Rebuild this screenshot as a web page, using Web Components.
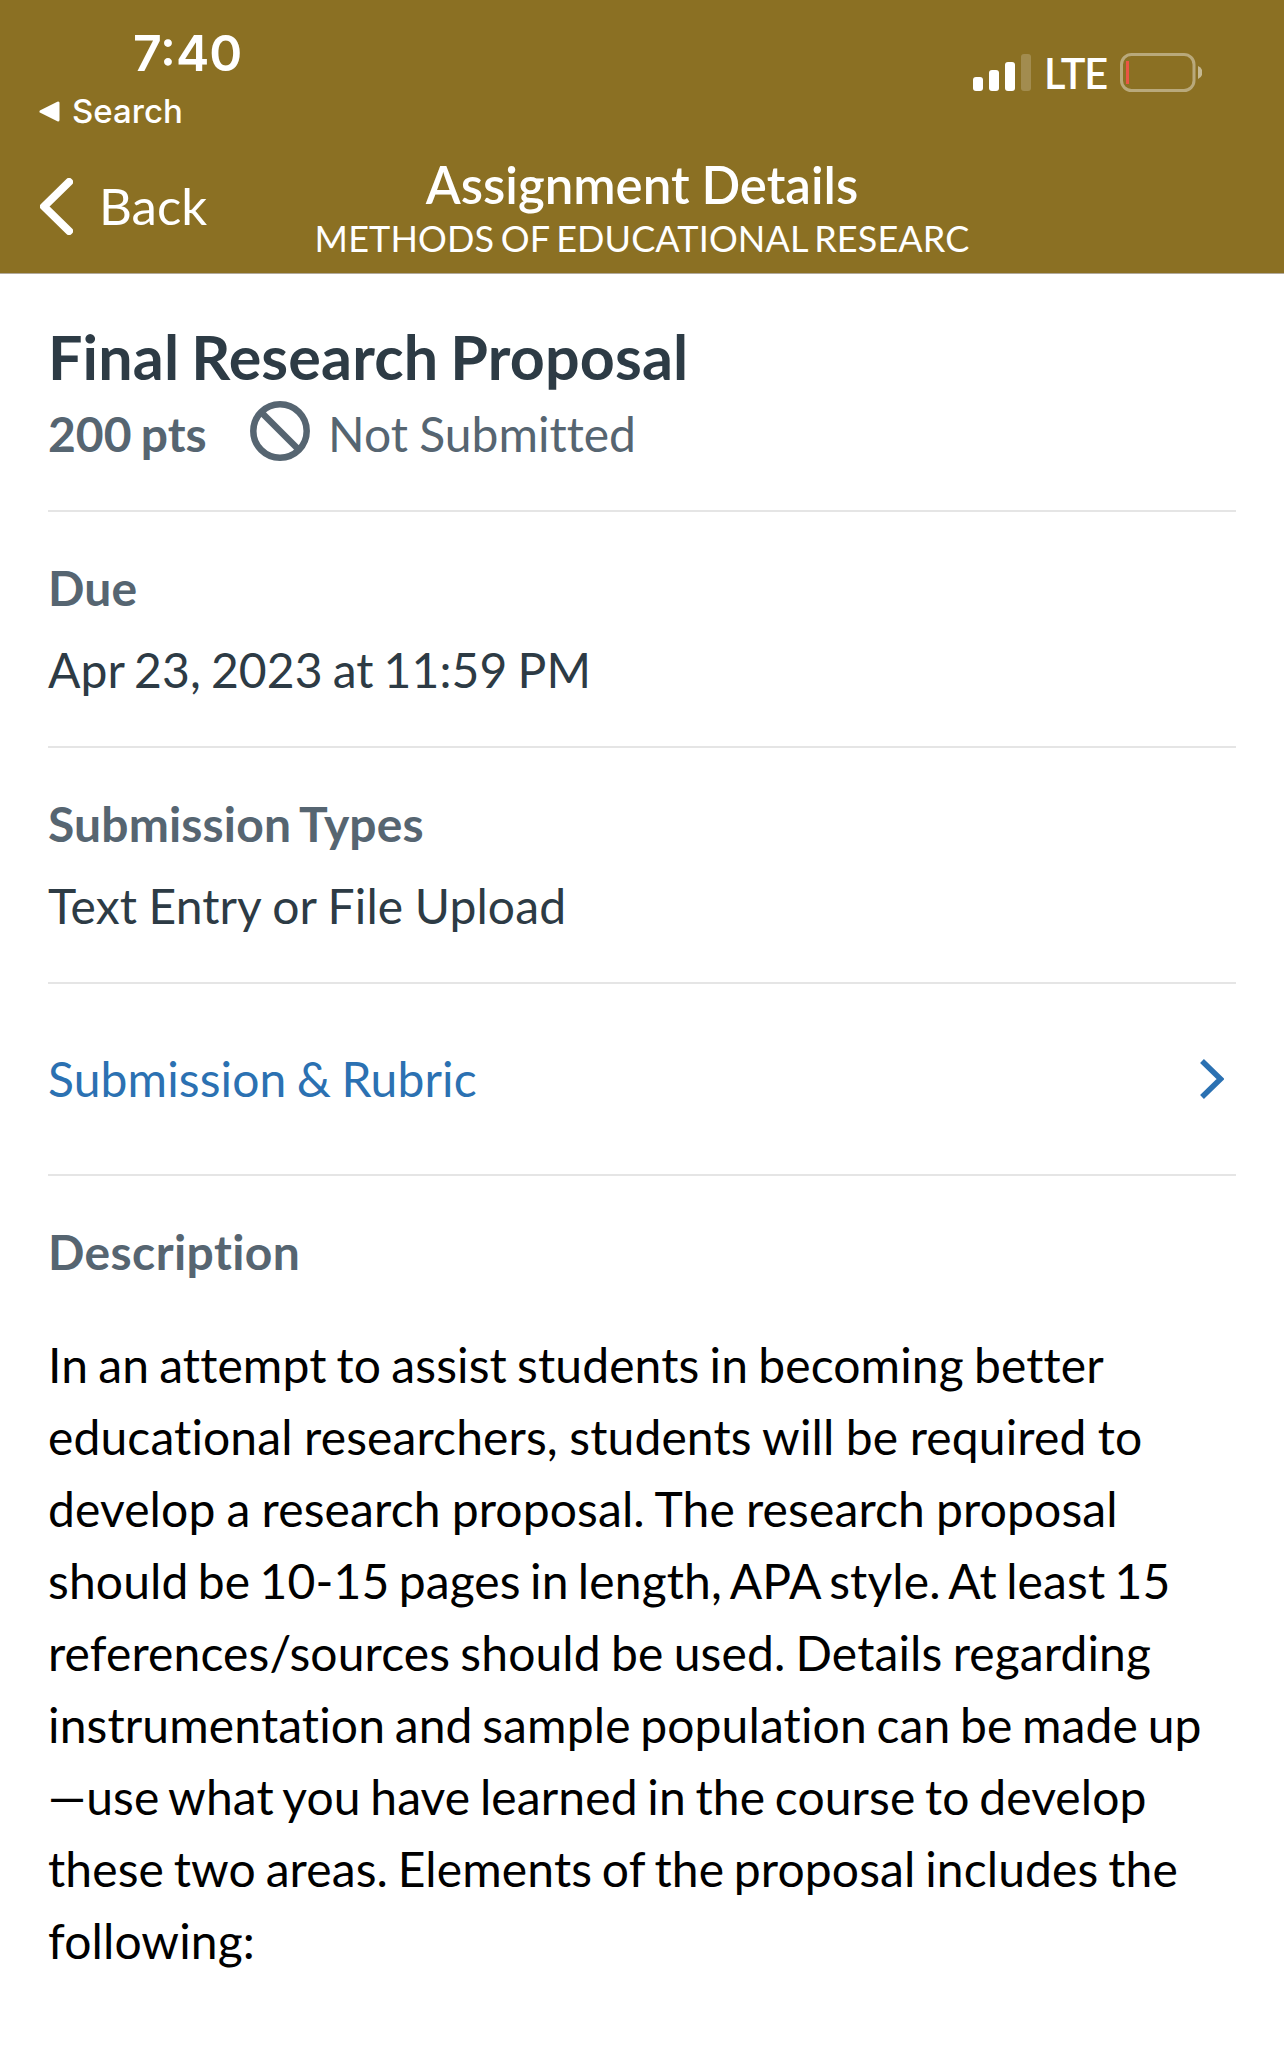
<!DOCTYPE html>
<html lang="en">
<head>
<meta charset="utf-8">
<title>Assignment Details</title>
<style>
    body {
        margin: 0;
        background: #fff;
        font-family: Lato, "Liberation Sans", sans-serif;
        font-variant-ligatures: none;
        word-spacing: -0.9px;
    }
</style>
</head>
<body>
    <status-bar time="7:40" app="Search" network="LTE"></status-bar>
    <nav-bar back="Back">
        <span slot="title">Assignment Details</span>
        <span slot="subtitle">METHODS OF EDUCATIONAL RESEARC</span>
    </nav-bar>
    <main>
        <assignment-header points="200 pts" status="Not Submitted">Final Research Proposal</assignment-header>
        <detail-section label="Due" style="--value-word: -2.4px">Apr 23, 2023 at 11:59 PM</detail-section>
        <detail-section label="Submission Types">Text Entry or File Upload</detail-section>
        <link-row>Submission &amp; Rubric</link-row>
        <description-block label="Description">
            <span style="word-spacing: -2.3px">In an attempt to assist students in becoming better</span>
            <span style="word-spacing: -1px">educational researchers, students will be required to</span>
            <span style="word-spacing: -1.3px">develop a research proposal. The research proposal</span>
            <span style="word-spacing: -3.1px">should be 10-15 pages in length, APA style. At least 15</span>
            <span style="word-spacing: -2.2px">references/sources should be used. Details regarding</span>
            <span style="word-spacing: -2.8px">instrumentation and sample population can be made up</span>
            <span style="word-spacing: -2.8px">—use what you have learned in the course to develop</span>
            <span style="word-spacing: -2.7px">these two areas. Elements of the proposal includes the</span>
            <span>following:</span>
        </description-block>
    </main>

<script>
    class StatusBar extends HTMLElement {
        constructor() {
            super();
            const shadowRoot = this.attachShadow({ mode: 'open' });
            shadowRoot.innerHTML = `
                <style>
                    :host {
                        display: flex;
                        justify-content: space-between;
                        box-sizing: border-box;
                        height: 141px;
                        padding: 23px 82px 0 39px;
                        background: #8b7023;
                        color: #fff;
                        font-family: Inter, "Liberation Sans", sans-serif;
                        font-variant-ligatures: normal;
                    }
                    .time {
                        margin: 0 0 8px 94px;
                        font-size: 50px;
                        font-weight: 600;
                        line-height: 60px;
                    }
                    .app {
                        display: flex;
                        align-items: center;
                        gap: 12px;
                        font-size: 33px;
                        font-weight: 500;
                        line-height: 40px;
                    }
                    .right {
                        display: flex;
                        align-items: flex-start;
                        padding-top: 30px;
                    }
                    .network {
                        width: 76px;
                        margin: -5px 0 0 13px;
                        font-family: Lato, "Liberation Sans", sans-serif;
                        font-size: 41.5px;
                        font-weight: 600;
                        line-height: 50px;
                        letter-spacing: -1px;
                    }
                    svg { display: block; }
                </style>
                <div>
                    <div class="time"></div>
                    <div class="app">
                        <svg width="21" height="21" viewBox="0 0 21 21"><path d="M2 10.5 19 2V19Z" fill="#fff" stroke="#fff" stroke-width="3" stroke-linejoin="round"/></svg>
                        <span></span>
                    </div>
                </div>
                <div class="right">
                    <svg width="58" height="39" viewBox="0 0 58 39" fill="#fff">
                        <rect x="0" y="24" width="10" height="14" rx="3"/>
                        <rect x="16" y="17" width="10" height="21" rx="3"/>
                        <rect x="32" y="9" width="10" height="29" rx="3"/>
                        <rect x="48" y="1" width="10" height="37" rx="3" opacity=".2"/>
                    </svg>
                    <span class="network"></span>
                    <svg width="82" height="39" viewBox="0 0 82 39">
                        <rect x="1.5" y="1.5" width="72.5" height="36" rx="10" fill="none" stroke="#fff" stroke-opacity=".4" stroke-width="3"/>
                        <path d="M78 13a7 7 0 0 1 0 13Z" fill="#fff" opacity=".5"/>
                        <rect x="6" y="8" width="3" height="23" fill="#eb5545"/>
                    </svg>
                </div>
            `;
            shadowRoot.querySelector('.time').textContent = this.getAttribute('time');
            shadowRoot.querySelector('.app span').textContent = this.getAttribute('app');
            shadowRoot.querySelector('.network').textContent = this.getAttribute('network');
        }
    }
    customElements.define('status-bar', StatusBar);

    class NavBar extends HTMLElement {
        constructor() {
            super();
            const shadowRoot = this.attachShadow({ mode: 'open' });
            shadowRoot.innerHTML = `
                <style>
                    :host {
                        display: grid;
                        grid-template-columns: 300px 1fr 300px;
                        box-sizing: border-box;
                        height: 133px;
                        padding-top: 14px;
                        border-bottom: 1px solid #b2aa9c;
                        background: #8b7023;
                        color: #fff;
                    }
                    .back {
                        display: flex;
                        align-items: flex-start;
                        gap: 26px;
                        padding: 21px 0 0 40px;
                        font-size: 51px;
                        line-height: 60px;
                    }
                    .back svg { margin-top: 2px; }
                    .titles {
                        display: flex;
                        flex-direction: column;
                        align-items: center;
                        gap: 1px;
                        white-space: nowrap;
                    }
                    .title { font-size: 51px; font-weight: 600; line-height: 60px; }
                    .subtitle {
                        font-size: 36px;
                        line-height: 44px;
                        letter-spacing: 0.12px;
                        word-spacing: -2.6px;
                    }
                </style>
                <div class="back">
                    <svg width="33" height="57" viewBox="0 0 33 57"><path d="M29 4 4 28.5 29 53" fill="none" stroke="#fff" stroke-width="8" stroke-linecap="round" stroke-linejoin="round"/></svg>
                    <span></span>
                </div>
                <div class="titles">
                    <div class="title"><slot name="title"></slot></div>
                    <div class="subtitle"><slot name="subtitle"></slot></div>
                </div>
            `;
            shadowRoot.querySelector('.back span').textContent = this.getAttribute('back');
        }
    }
    customElements.define('nav-bar', NavBar);

    class AssignmentHeader extends HTMLElement {
        constructor() {
            super();
            const shadowRoot = this.attachShadow({ mode: 'open' });
            shadowRoot.innerHTML = `
                <style>
                    :host {
                        display: block;
                        margin: 0 48px;
                        padding: 47px 0 49px;
                        border-bottom: 2px solid #e5e5e5;
                        color: #566571;
                    }
                    .name {
                        color: #2d3b45;
                        font-size: 61px;
                        font-weight: 700;
                        line-height: 72px;
                        letter-spacing: 0.15px;
                        word-spacing: -2.9px;
                    }
                    .row {
                        display: flex;
                        margin-top: 8px;
                        height: 60px;
                        font-size: 48px;
                        line-height: 66px;
                    }
                    .points { width: 202px; font-weight: 700; word-spacing: -2.4px; }
                    svg { margin-right: 18px; }
                </style>
                <div class="name"><slot></slot></div>
                <div class="row">
                    <span class="points"></span>
                    <svg width="60" height="60" viewBox="0 0 60 60" fill="none" stroke="#566571" stroke-width="6.5"><circle cx="30" cy="30" r="26.7"/><path d="M11.5 11.5 48.5 48.5"/></svg>
                    <span class="status"></span>
                </div>
            `;
            shadowRoot.querySelector('.points').textContent = this.getAttribute('points');
            shadowRoot.querySelector('.status').textContent = this.getAttribute('status');
        }
    }
    customElements.define('assignment-header', AssignmentHeader);

    class DetailSection extends HTMLElement {
        constructor() {
            super();
            const shadowRoot = this.attachShadow({ mode: 'open' });
            shadowRoot.innerHTML = `
                <style>
                    :host {
                        display: block;
                        margin: 0 48px;
                        padding: 47px 0;
                        border-bottom: 2px solid #e5e5e5;
                        color: #2d3b45;
                        font-size: 48px;
                        line-height: 58px;
                    }
                    .label {
                        margin-bottom: 24px;
                        color: #566571;
                        font-weight: 700;
                        letter-spacing: 0.15px;
                        word-spacing: -2.5px;
                    }
                    .value { letter-spacing: 0.1px; word-spacing: var(--value-word, -0.9px); }
                </style>
                <div class="label"></div>
                <div class="value"><slot></slot></div>
            `;
            shadowRoot.querySelector('.label').textContent = this.getAttribute('label');
        }
    }
    customElements.define('detail-section', DetailSection);

    class LinkRow extends HTMLElement {
        constructor() {
            super();
            const shadowRoot = this.attachShadow({ mode: 'open' });
            shadowRoot.innerHTML = `
                <style>
                    :host {
                        display: flex;
                        align-items: center;
                        justify-content: space-between;
                        height: 190px;
                        margin: 0 48px;
                        padding-right: 12px;
                        border-bottom: 2px solid #e5e5e5;
                        color: #2b71b2;
                        font-size: 48px;
                        line-height: 58px;
                        letter-spacing: 0.12px;
                        word-spacing: -2.1px;
                    }
                </style>
                <span><slot></slot></span>
                <svg width="24" height="40" viewBox="0 0 24 40"><path d="M2 2 20.5 20 2 38" fill="none" stroke="currentColor" stroke-width="5.5"/></svg>
            `;
        }
    }
    customElements.define('link-row', LinkRow);

    class DescriptionBlock extends HTMLElement {
        constructor() {
            super();
            const shadowRoot = this.attachShadow({ mode: 'open' });
            shadowRoot.innerHTML = `
                <style>
                    :host {
                        display: block;
                        margin: 0 48px;
                        padding-top: 47px;
                        color: #000;
                        font-size: 48px;
                        line-height: 58px;
                    }
                    .label { color: #566571; font-weight: 700; letter-spacing: 0.4px; }
                    .text {
                        margin-top: 48px;
                        line-height: 72px;
                        letter-spacing: 0.12px;
                        white-space: nowrap;
                    }
                    ::slotted(span) { display: block; }
                </style>
                <div class="label"></div>
                <div class="text"><slot></slot></div>
            `;
            shadowRoot.querySelector('.label').textContent = this.getAttribute('label');
        }
    }
    customElements.define('description-block', DescriptionBlock);
</script>
</body>
</html>
